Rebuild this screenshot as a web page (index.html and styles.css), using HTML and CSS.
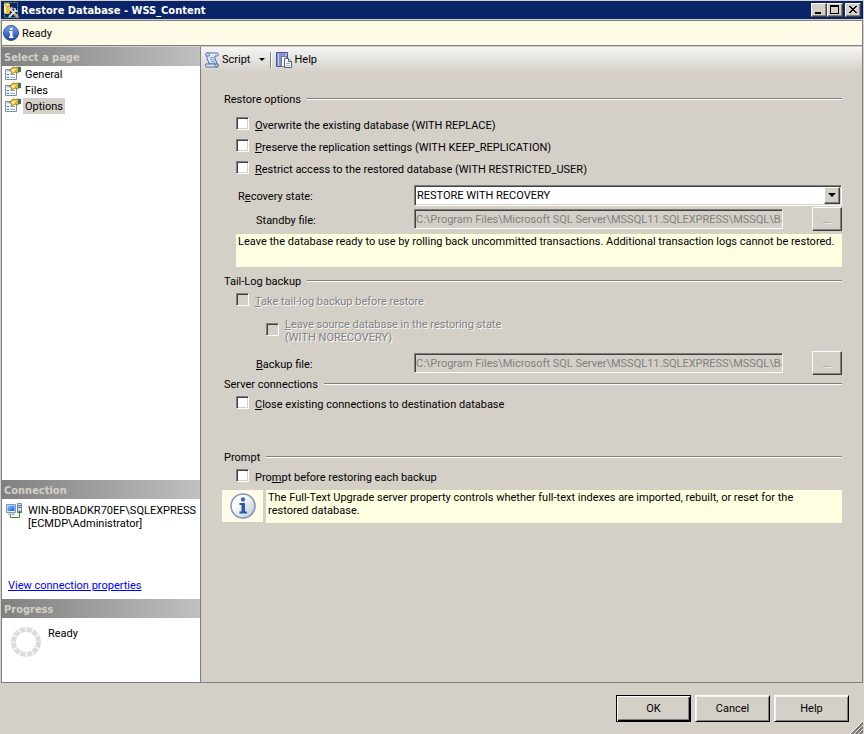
FILE: index.html
```html
<!DOCTYPE html>
<html lang="en">
<head>
<meta charset="utf-8">
<title>Restore Database - WSS_Content</title>
<link rel="stylesheet" href="styles.css">
</head>
<body>
<svg class="defs" aria-hidden="true">
  <defs>
    <linearGradient id="blueDisc" x1="0" y1="0" x2="0" y2="1"><stop offset="0" stop-color="#7ba4ea"/><stop offset="1" stop-color="#1743ae"/></linearGradient>
    <linearGradient id="paleDisc" x1="0" y1="0" x2="1" y2="1"><stop offset="0.3" stop-color="#fff"/><stop offset="1" stop-color="#b9c3d4"/></linearGradient>
    <linearGradient id="paper" x1="0" y1="0" x2="1" y2="1"><stop offset="0" stop-color="#fff"/><stop offset="1" stop-color="#a9c2ea"/></linearGradient>
    <linearGradient id="screen" x1="0" y1="0" x2="1" y2="1"><stop offset="0" stop-color="#8cc8ff"/><stop offset="1" stop-color="#1258d8"/></linearGradient>
    <symbol id="page" viewBox="0 0 16 16">
      <path d="M.5 3.500h11v10H.5z" fill="#f7f9fd" stroke="#7f8ca6"/>
      <path d="M1 4h10v1.500H1z" fill="#c4d2ea"/>
      <path d="M2 8h2v1H2zM2 11h2v1H2z" fill="#3a62b0"/><path d="M5 8h5v1H5zM5 11h5v1H5z" fill="#a5b0c4"/>
      <path d="M4 4.500l4-3.500 3 .5 1-.5h2v5l-2 1-2-1-3 2.500-1-1 1-2z" fill="#dfb63a" stroke="#8a6d20" stroke-width=".7"/>
      <path d="M6 4.500l3-2 2 1-3 3z" fill="#fbeaa0"/><path d="M13 1h3v5h-3z" fill="#3c7454"/>
    </symbol>
  </defs>
</svg>
<div class="window">
  <header class="titlebar">
    <svg class="icon" viewBox="0 0 16 16" aria-hidden="true">
      <path d="M1.500 .5h13v15h-13z" fill="none" stroke="#4ea45a" stroke-dasharray="2 1"/>
      <path d="M1 2.500v8c0 2 6 2 6 0v-8z" fill="#f0bd28"/><path d="M1 3v7.500l2 1V3z" fill="#fff0a0"/><ellipse cx="4" cy="2.500" rx="3" ry="1.500" fill="#ffe98a" stroke="#a37a14" stroke-width=".5"/>
      <path d="M6 15l7-7M7 7l8 8" stroke="#e2e5ea" stroke-width="1.800"/><path d="M11 12l4 4" stroke="#c59a54" stroke-width="2"/>
      <path d="M5 8l3-3 3 1-3 3z" fill="#c3cad4"/><path d="M12 6v3h3" fill="none" stroke="#d9dee6" stroke-width="1.500"/>
    </svg>
    <h1>Restore Database - WSS_Content</h1>
    <div class="captions">
      <button type="button" aria-label="Minimize"><svg viewBox="0 0 12 10"><path d="M2 7h6v2H2z"/></svg></button>
      <button type="button" aria-label="Maximize"><svg viewBox="0 0 12 10"><path d="M1 0h9v9H1zM2 2v6h7V2z" fill-rule="evenodd"/></svg></button>
      <button type="button" class="close" aria-label="Close"><svg viewBox="0 0 12 10"><path d="M2 1h2v1h1v1h2V2h1V1h2v1H9v1H8v1H7v1h1v1h1v1h1v1H8V7H7V6H5v1H4v1H2V7h1V6h1V5h1V4H4V3H3V2H2z"/></svg></button>
    </div>
  </header>
  <div class="status">
    <svg class="icon" viewBox="0 0 16 16" aria-hidden="true"><circle cx="8" cy="8" r="7.500" fill="url(#blueDisc)" stroke="#34569c"/><path d="M7 3h2.500v2H7zM6 6h3.500v5.500h1V13H6v-1.500h1v-4H6z" fill="#fff"/></svg>
    <span>Ready</span>
  </div>
  <div class="workspace">
    <aside class="side">
      <h2>Select a page</h2>
      <nav class="pages">
        <a href="#general"><svg class="icon" aria-hidden="true"><use href="#page"/></svg><span>General</span></a>
        <a href="#files"><svg class="icon" aria-hidden="true"><use href="#page"/></svg><span>Files</span></a>
        <a href="#options" aria-current="page"><svg class="icon" aria-hidden="true"><use href="#page"/></svg><span>Options</span></a>
      </nav>
      <h2>Connection</h2>
      <section class="connection">
        <div class="server">
          <svg class="icon" viewBox="0 0 16 16" aria-hidden="true">
            <path d="M.5 1.500h9v8h-9z" fill="#e6eef8" stroke="#8396b8"/><path d="M1.500 2.500h7v5.500h-7z" fill="url(#screen)"/><path d="M2 10.500h7v1.500H2z" fill="#a9b8d0"/>
            <path d="M11.500.5h4v9h-4z" fill="#dce6f4" stroke="#7187b0"/><path d="M12 2h3v1h-3zM12 4h3v1h-3z" fill="#4a6eb4"/>
            <path d="M4.500 12v2.500h9V9" fill="none" stroke="#3c8c2c"/><path d="M11 10l2.500-3 2.500 3z" fill="#3c8c2c"/>
          </svg>
          <p>WIN-BDBADKR70EF\SQLEXPRESS<br>[ECMDP\Administrator]</p>
        </div>
        <a href="#connection">View connection properties</a>
      </section>
      <h2>Progress</h2>
      <section class="progress">
        <svg class="spinner" viewBox="0 0 32 32" aria-hidden="true"><circle cx="16" cy="16" r="12.500" fill="none" stroke="#dcdcdc" stroke-width="5" stroke-dasharray="5.500 1.045"/></svg>
        <span>Ready</span>
      </section>
    </aside>
    <main>
      <div class="toolbar">
        <button type="button"><svg class="icon" viewBox="0 0 16 16" aria-hidden="true">
          <path d="M3 1h10c2 0 2 3 0 3h-2c-1 3 2 5 2 8H5C5 9 2 7 3 4z" fill="url(#paper)" stroke="#4d6aa5"/>
          <path d="M3 1c-2 0-2 3 0 3h2c1 0 1-3-2-3z" fill="#dbe7fa" stroke="#4d6aa5"/>
          <path d="M2 12h9c0 2 1 3 2 3H3c-2 0-2-3-1-3z" fill="#dbe7fa" stroke="#4d6aa5"/><path d="M13 15c2 0 2-3 0-3" fill="#7f9cd0" stroke="#4d6aa5"/>
          <path d="M5.500 5.500h4M6 7.500h4M7 9.500h4" stroke="#8aa4d2"/>
        </svg>Script<i class="drop"></i></button>
        <span class="divider"></span>
        <button type="button"><svg class="icon" viewBox="0 0 16 16" aria-hidden="true">
          <path d="M.5.5h11v14H.5z" fill="#8494ce" stroke="#46559a"/><path d="M2.500 1v13" stroke="#c4cdee"/><path d="M9 1h2v4H9z" fill="#aab6e0"/>
          <path d="M5.500 4.500h5v10h-5z" fill="#fff" stroke="#6c7890"/><path d="M8.500 6.500h4l3 3v6h-7z" fill="#fff" stroke="#52617e"/><path d="M12.500 6.500v3h3" fill="#cdd8ec" stroke="#52617e"/><path d="M10 11.500h4M10 13.500h4" stroke="#9ba9c2"/>
        </svg>Help</button>
      </div>
      <form>
        <fieldset>
          <legend><span>Restore options</span></legend>
          <label class="check"><input type="checkbox"><span><u>O</u>verwrite the existing database (WITH REPLACE)</span></label>
          <label class="check"><input type="checkbox"><span><u>P</u>reserve the replication settings (WITH KEEP_REPLICATION)</span></label>
          <label class="check"><input type="checkbox"><span><u>R</u>estrict access to the restored database (WITH RESTRICTED_USER)</span></label>
          <div class="field state">
            <label for="recovery">R<u>e</u>covery state:</label>
            <div class="combo"><select id="recovery"><option>RESTORE WITH RECOVERY</option></select><span class="arrow"><i class="drop"></i></span></div>
          </div>
          <div class="field">
            <label for="standby">Standby file:</label>
            <input id="standby" type="text" disabled value="C:\Program Files\Microsoft SQL Server\MSSQL11.SQLEXPRESS\MSSQL\Backup">
            <button type="button" disabled aria-label="Browse standby file">...</button>
          </div>
          <p class="note">Leave the database ready to use by rolling back uncommitted transactions. Additional transaction logs cannot be restored.</p>
        </fieldset>
        <fieldset class="taillog">
          <legend><span>Tail-Log backup</span></legend>
          <label class="check off"><input type="checkbox" disabled><span><u>T</u>ake tail-log backup before restore</span></label>
          <label class="check off nested"><input type="checkbox" disabled><span><u>L</u>eave source database in the restoring state<br>(WITH NORECOVERY)</span></label>
          <div class="field">
            <label for="backup"><u>B</u>ackup file:</label>
            <input id="backup" type="text" disabled value="C:\Program Files\Microsoft SQL Server\MSSQL11.SQLEXPRESS\MSSQL\Backup">
            <button type="button" disabled aria-label="Browse backup file">...</button>
          </div>
        </fieldset>
        <fieldset class="connections">
          <legend><span>Server connections</span></legend>
          <label class="check"><input type="checkbox"><span><u>C</u>lose existing connections to destination database</span></label>
        </fieldset>
        <fieldset>
          <legend><span>Prompt</span></legend>
          <label class="check"><input type="checkbox"><span>Pro<u>m</u>pt before restoring each backup</span></label>
          <div class="advice">
            <div class="badge"><svg viewBox="0 0 26 26" aria-hidden="true"><circle cx="13" cy="13" r="12" fill="url(#paleDisc)" stroke="#7d93bb" stroke-width="1.500"/><circle cx="13" cy="6.500" r="2.200" fill="#3f6cc0"/><path d="M9.500 10h5.500v8.500h2V20.500H9.500v-2h2v-6.500h-2z" fill="#2d56ae"/></svg></div>
            <p class="note">The Full-Text Upgrade server property controls whether full-text indexes are imported, rebuilt, or reset for the restored database.</p>
          </div>
        </fieldset>
      </form>
    </main>
  </div>
  <footer>
    <button type="submit" class="default">OK</button>
    <button type="button">Cancel</button>
    <button type="button">Help</button>
    <svg class="grip" viewBox="0 0 13 13" aria-hidden="true"><path d="M0 13L13 0M4 13l9-9M8 13l5-5" stroke="#fff"/><path d="M1.500 13.500l12-12M5.500 13.500l8-8M9.500 13.500l4-4" stroke="#77746e" stroke-width="2"/></svg>
  </footer>
</div>
</body>
</html>
```
FILE: styles.css
```css
:root {
  --face: #d4d0c8;
  --shadow: #808080;
  --dark: #404040;
  --tip: #ffffe1;
}
*, ::before, ::after { box-sizing: border-box; }
body, h1, h2, p, fieldset, legend { margin: 0; padding: 0; }
body, button, input, select {
  font-family: Roboto, "Liberation Sans", sans-serif;
  font-size: 11px;
  line-height: 13px;
  color: #000;
}
.defs { position: absolute; width: 0; height: 0; }
.icon { width: 16px; height: 16px; flex: none; }
.window { display: flex; flex-direction: column; min-height: 100vh; background: var(--face); padding-top: 1px; }

h1, h2 { font-family: "DejaVu Sans Condensed", "DejaVu Sans", sans-serif; font-size: 11px; font-weight: bold; }
.titlebar { display: flex; align-items: center; height: 18px; margin: 0 1px; padding-left: 2px; gap: 2px; background: #0a246a; }
.titlebar h1 { flex: 1; color: #fff; }
.captions { display: flex; padding-right: 2px; }
.captions button { width: 16px; height: 14px; padding: 1px; background: var(--face); border: 1px solid; border-color: #fff var(--dark) var(--dark) #fff; box-shadow: inset -1px -1px var(--shadow); }
.captions .close { margin-left: 2px; }
.captions svg { display: block; width: 12px; height: 10px; }

.status { display: flex; align-items: center; gap: 3px; height: 26px; margin: 1px 1px 0; padding: 0 1px 1px; background: #fffbe6; border: 1px solid var(--shadow); }
.status span { padding-top: 2px; }

.workspace { flex: 1; display: flex; margin: 0 1px; border: 1px solid var(--shadow); border-top: 0; }
.side { display: flex; flex-direction: column; width: 199px; background: #fff; border-right: 1px solid var(--shadow); border-top: 1px solid var(--face); }
.side h2 { height: 19px; padding-left: 2px; line-height: 21px; color: var(--face); background: linear-gradient(90deg, #808080, #c0c0c0); }
.pages { flex: 1; }
.pages a { display: flex; gap: 2px; height: 16px; padding-left: 3px; color: #000; text-decoration: none; }
.pages span { padding: 2px 2px 1px; }
.pages [aria-current] span { background: var(--face); }
.connection { display: flex; flex-direction: column; align-items: flex-start; justify-content: space-between; height: 100px; padding: 4px 6px 7px; }
.server { display: flex; margin-left: -2px; gap: 6px; }
.server p { padding-top: 1px; white-space: nowrap; }
.connection a { color: #00f; }
.progress { display: flex; gap: 6px; height: 64px; padding: 8px; }
.progress span { padding-top: 1px; }
.spinner { width: 32px; height: 32px; }

main { flex: 1; min-width: 0; }
.toolbar { display: flex; align-items: center; height: 26px; padding: 0 3px; background: linear-gradient(#f6f6f5, #d4d0c8); border-top: 1px solid var(--face); }
.toolbar button { display: flex; align-items: center; gap: 2px; padding: 0; background: none; border: 0; }
.drop { width: 0; height: 0; border: 3px solid transparent; border-top-color: #000; border-bottom-width: 0; }
.toolbar .drop { margin: 0 5px 0 7px; }
.divider { width: 2px; height: 16px; margin-right: 4px; border-left: 1px solid var(--shadow); border-right: 1px solid #fff; }

form { padding: 19px 20px 0 21px; }
fieldset { border: 0; min-width: 0; margin-bottom: 6px; padding-left: 14px; }
legend { display: flex; align-items: center; gap: 6px; width: calc(100% + 12px); height: 16px; margin-left: -12px; }
legend::after { content: ""; flex: 1; height: 2px; background: var(--shadow); border-bottom: 1px solid #fff; }
.check { display: flex; align-items: center; gap: 6px; height: 22px; }
.check span { padding-top: 2px; }
input[type=checkbox] { appearance: none; flex: none; width: 13px; height: 13px; margin: 0 0 2px; background: #fff; border: 1px solid; border-color: var(--shadow) #fff #fff var(--shadow); box-shadow: inset 1px 1px var(--dark), inset -1px -1px var(--face); }
input[type=checkbox]:disabled { background: var(--face); }
.off { color: var(--shadow); text-shadow: 1px 1px #fff; }
.nested { height: 34px; margin: 2px 0 4px 30px; }
fieldset:first-child legend { margin-bottom: 6px; }
.field { display: flex; align-items: center; height: 24px; }
.field > label { width: 178px; padding: 2px 0 0 20px; }
.state { margin-top: 4px; }
.state > label { padding-left: 2px; }
.field input { flex: 1; min-width: 0; height: 20px; margin-right: 29px; padding: 1px 0 0 1px; background: var(--face); color: var(--shadow); border: 1px solid; border-color: var(--shadow) #fff #fff var(--shadow); box-shadow: inset 1px 1px var(--dark); }
.field button { width: 30px; height: 24px; padding: 0; background: var(--face); color: var(--shadow); text-shadow: 1px 1px #fff; border: 1px solid; border-color: #fff var(--dark) var(--dark) #fff; box-shadow: inset -1px -1px var(--shadow); }
.combo { position: relative; flex: 1; }
.combo select { display: block; appearance: none; width: 100%; height: 21px; padding: 1px 20px 0 2px; border-radius: 0; background: #fff; border: 1px solid; border-color: var(--shadow) #fff #fff var(--shadow); box-shadow: inset 1px 1px var(--dark), inset -1px -1px var(--face); }
.arrow { position: absolute; top: 2px; right: 2px; bottom: 2px; width: 16px; display: flex; align-items: center; justify-content: center; pointer-events: none; background: var(--face); border: 1px solid; border-color: #fff var(--dark) var(--dark) #fff; box-shadow: inset -1px -1px var(--shadow); }
.arrow .drop { border-width: 4px 4px 0; }
.note { min-height: 33px; padding: 1px 2px; background: var(--tip); }
.field + .note { margin-top: 3px; }
.taillog { margin-bottom: 1px; }
.connections { min-height: 67px; }
.advice { display: flex; gap: 3px; margin: 3px 0 0 -14px; }
.advice .note { flex: 1; padding-right: 24px; }
.badge { display: flex; align-items: center; justify-content: center; width: 41px; height: 32px; background: #fffbe6; }
.badge svg { width: 26px; height: 26px; }

footer { position: relative; display: flex; justify-content: flex-end; gap: 4px; height: 51px; padding: 12px 15px 0; }
footer button { width: 75px; height: 27px; padding: 0; background: var(--face); border: 1px solid; border-color: #fff #000 #000 #fff; box-shadow: inset 1px 1px #f4f2ee, inset -1px -1px var(--shadow); }
footer .default { border-color: #000; box-shadow: inset 1px 1px #fff, inset -1px -1px #000, inset -2px -2px var(--shadow); }
.grip { position: absolute; right: 1px; bottom: 0; width: 13px; height: 13px; }
```
